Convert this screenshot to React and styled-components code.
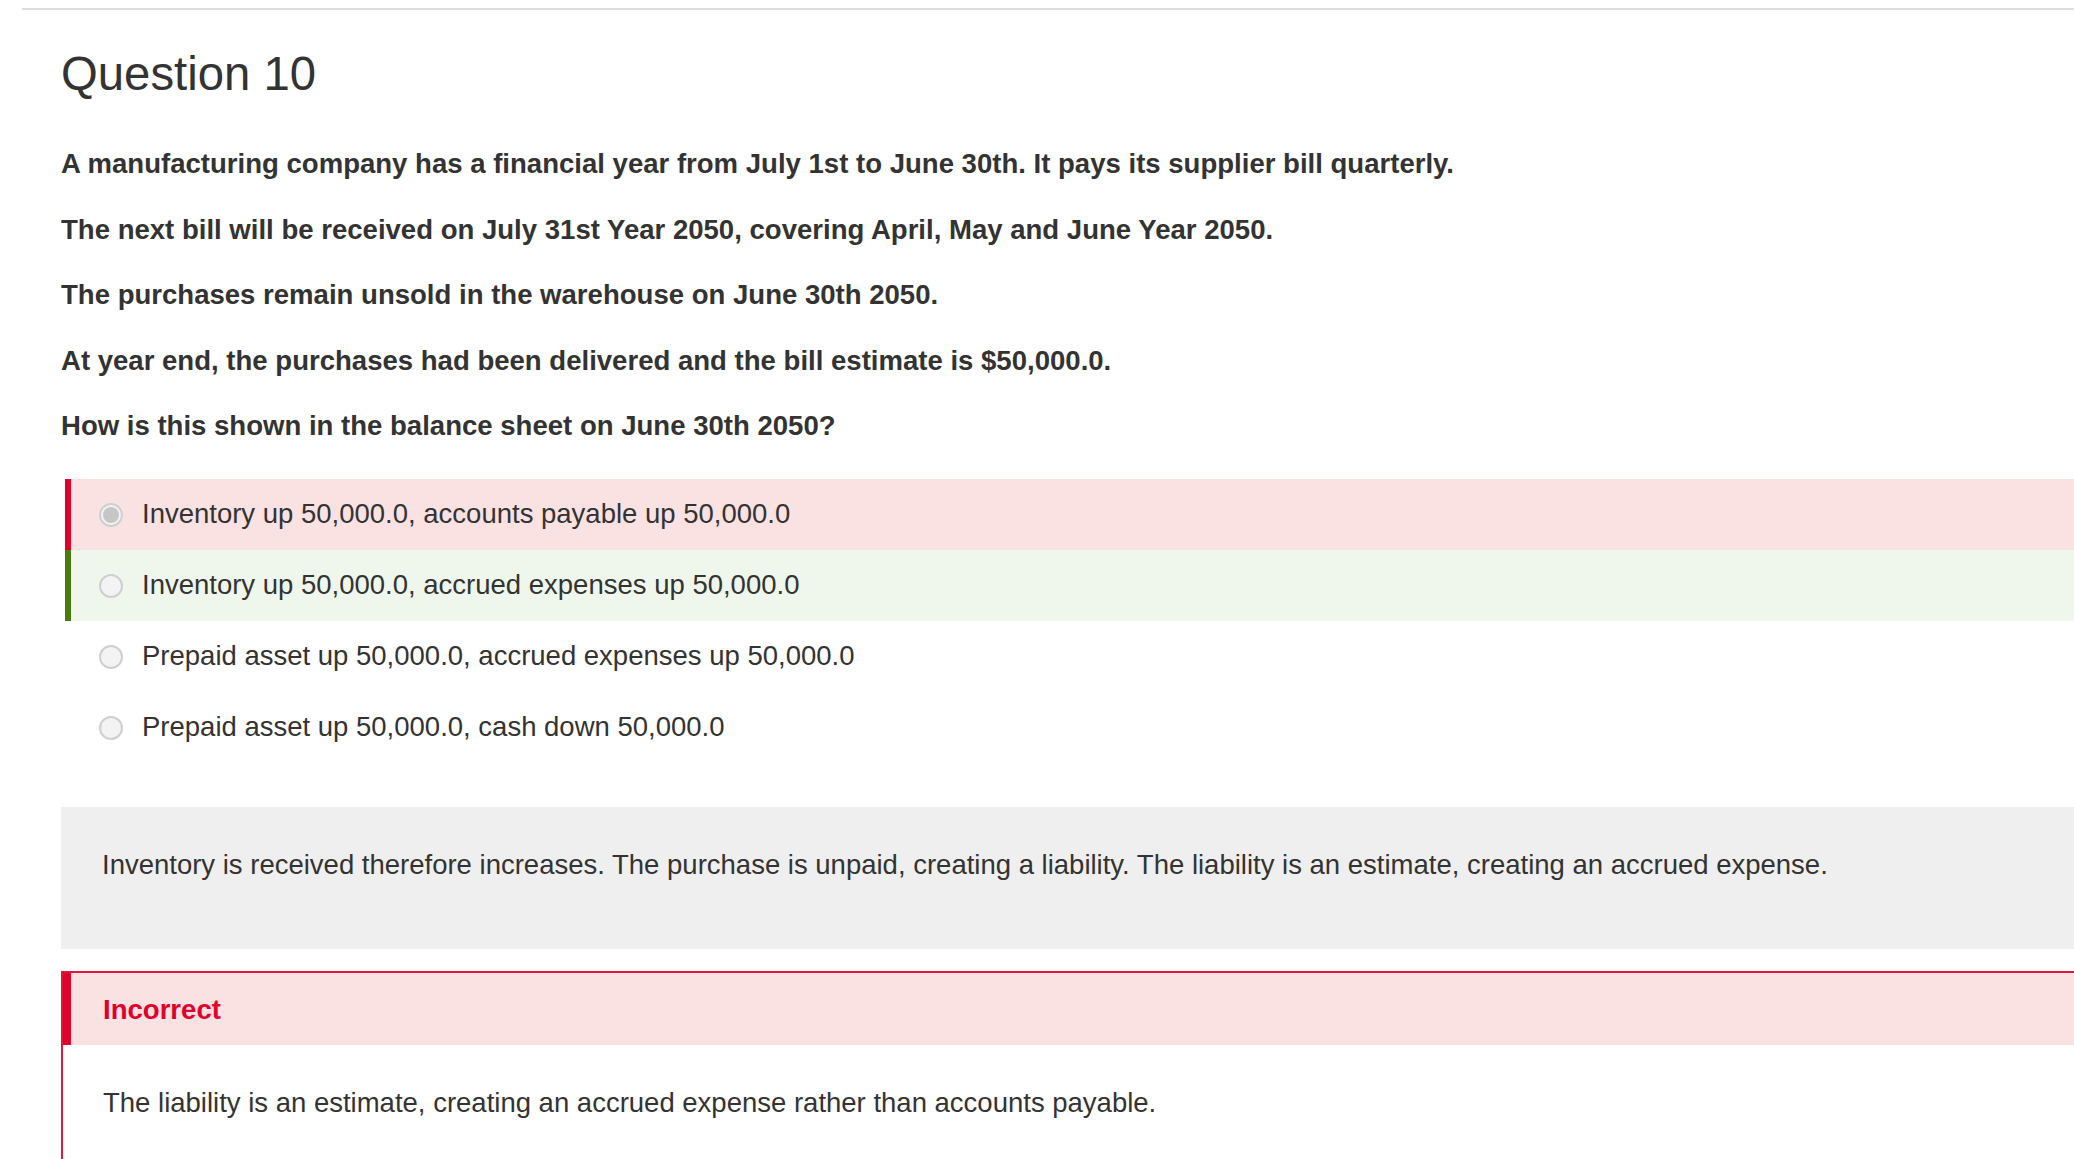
import styled, { createGlobalStyle } from 'styled-components';

const GlobalStyle = createGlobalStyle`
	html, body {
		margin: 0;
		padding: 0;
		background: #ffffff;
		overflow: hidden;
	}
	body {
		font-family: 'Liberation Sans', Arial, sans-serif;
		color: #333333;
	}
`;

const StyledPage = styled.div`
	margin: 8px 0 0 22px;
	width: 2200px;
	border-top: 2px solid #dddddd;
	padding: 38px 0 60px 39px;
`;

const StyledTitle = styled.h3`
	margin: 0 0 44px;
	font-size: 47.3px;
	line-height: 52px;
	font-weight: 400;
	color: #333333;
`;

const StyledStem = styled.div`
	display: flex;
	flex-direction: column;
	gap: 26.5px;
`;

const StyledStemLine = styled.p`
	margin: 0;
	font-size: 27.55px;
	line-height: 39px;
	font-weight: 700;
	color: #333333;
`;

const StyledOptions = styled.div`
	margin: 34px 0 0 4px;
	display: flex;
	flex-direction: column;
`;

const rowColors = {
	wrong: { bar: '#e0002b', bg: '#fae2e3' },
	right: { bar: '#4b7a0d', bg: '#eff7ec' },
	none: { bar: 'transparent', bg: 'transparent' },
};

const StyledOption = styled.label`
	display: flex;
	align-items: center;
	gap: 19px;
	height: 71px;
	padding: 0 0 0 28px;
	border-left: 6px solid ${props => rowColors[props.state].bar};
	background: ${props => rowColors[props.state].bg};
`;

const StyledRadio = styled.span`
	position: relative;
	flex: none;
	width: 24px;
	height: 24px;
	box-sizing: border-box;
	border-radius: 50%;
	border: 2px solid #cfcfcf;
	background: #f3f3f3;

	&::after {
		content: '';
		display: ${props => props.checked ? 'block' : 'none'};
		position: absolute;
		top: 2px;
		left: 2px;
		width: 16px;
		height: 16px;
		border-radius: 50%;
		background: #c6c6c6;
	}
`;

const StyledOptionText = styled.span`
	font-size: 27.5px;
	line-height: 39px;
	padding-bottom: 2px;
	color: #333333;
`;

const StyledExplanation = styled.div`
	margin: 44px 0 0;
	padding: 38px 41px 65px;
	background: #efefef;
	font-size: 27.5px;
	line-height: 39px;
	color: #333333;
`;

const StyledVerdict = styled.div`
	margin: 22px 0 0;
	border: 2px solid #e0163d;
	border-bottom: none;
	background: #ffffff;
`;

const StyledVerdictHead = styled.div`
	padding: 16.5px 32px;
	border-left: 8px solid #e0002b;
	background: #fae2e3;
	font-size: 27.55px;
	line-height: 39px;
	font-weight: 700;
	color: #e0002b;
`;

const StyledVerdictBody = styled.div`
	padding: 37.5px 39px 40px 40px;
	font-size: 27.5px;
	line-height: 39px;
	color: #333333;
`;

const stem = [
	'A manufacturing company has a financial year from July 1st to June 30th. It pays its supplier bill quarterly.',
	'The next bill will be received on July 31st Year 2050, covering April, May and June Year 2050.',
	'The purchases remain unsold in the warehouse on June 30th 2050.',
	'At year end, the purchases had been delivered and the bill estimate is $50,000.0.',
	'How is this shown in the balance sheet on June 30th 2050?',
];

const options = [
	{ text: 'Inventory up 50,000.0, accounts payable up 50,000.0', state: 'wrong', checked: true },
	{ text: 'Inventory up 50,000.0, accrued expenses up 50,000.0', state: 'right', checked: false },
	{ text: 'Prepaid asset up 50,000.0, accrued expenses up 50,000.0', state: 'none', checked: false },
	{ text: 'Prepaid asset up 50,000.0, cash down 50,000.0', state: 'none', checked: false },
];

const App = () => {
	return (
		<>
			<GlobalStyle />
			<StyledPage>
				<StyledTitle>Question 10</StyledTitle>
				<StyledStem>
					{stem.map(line => (
						<StyledStemLine key={line}>{line}</StyledStemLine>
					))}
				</StyledStem>
				<StyledOptions>
					{options.map(option => (
						<StyledOption key={option.text} state={option.state}>
							<StyledRadio checked={option.checked} />
							<StyledOptionText>{option.text}</StyledOptionText>
						</StyledOption>
					))}
				</StyledOptions>
				<StyledExplanation>
					Inventory is received therefore increases. The purchase is unpaid, creating a liability. The liability is an estimate, creating an accrued expense.
				</StyledExplanation>
				<StyledVerdict>
					<StyledVerdictHead>Incorrect</StyledVerdictHead>
					<StyledVerdictBody>
						The liability is an estimate, creating an accrued expense rather than accounts payable.
					</StyledVerdictBody>
				</StyledVerdict>
			</StyledPage>
		</>
	);
};

export default App;
